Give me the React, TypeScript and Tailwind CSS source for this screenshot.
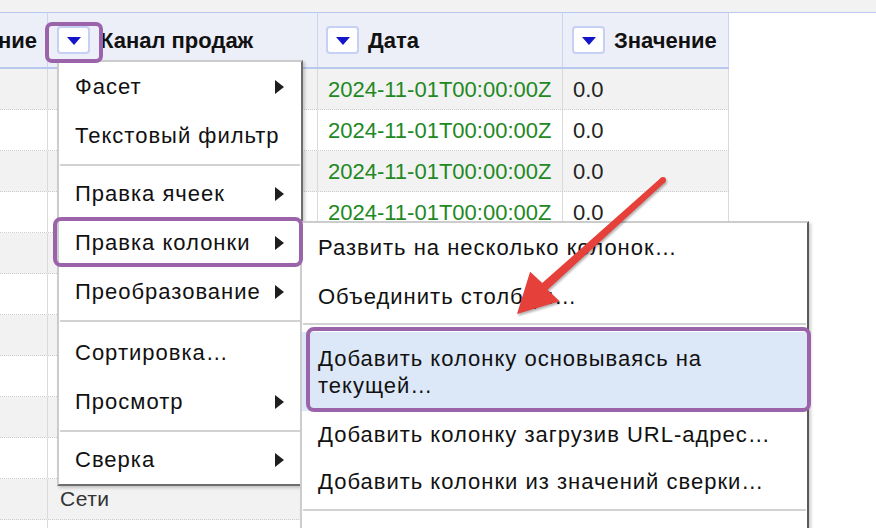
const HeaderButton = () => (
  <span className="flex h-[28px] w-[33px] shrink-0 items-center justify-center rounded-[4px] border-2 border-[#c5d0f2] bg-white">
    <span className="mt-[1px] h-0 w-0 border-x-[7px] border-t-[8px] border-x-transparent border-t-[#1414c8]" />
  </span>
);

const SubArrow = () => (
  <span className="h-0 w-0 border-y-[7px] border-l-[9px] border-y-transparent border-l-[#1e1e1e]" />
);

const Separator = ({ top = "mt-[4px] mb-[3px]" }: { top?: string }) => (
  <div className={`${top} mx-[1px] h-[2px] bg-[#d2d2d2]`} />
);

const MenuItem = ({ label, sub }: { label: string; sub?: boolean }) => (
  <div className="flex h-[49px] items-center justify-between pl-[16px] pr-[17px] text-[22px] tracking-[1px] text-[#111]">
    <span>{label}</span>
    {sub && <SubArrow />}
  </div>
);

const App = () => {
  const rows = Array.from({ length: 12 }, (_, i) => ({
    channel: i === 10 ? "Сети" : "",
    date: "2024-11-01T00:00:00Z",
    value: "0.0",
  }));

  return (
    <div className="relative h-[528px] w-[876px] overflow-hidden bg-white font-['Liberation_Sans',Arial,sans-serif]">
      <div className="h-[13px] border-b border-[#b9c8ee] bg-[#f2f2f2]" />

      <div className="w-[729px]">
        {/* header */}
        <div className="flex h-[56px] border-b-2 border-[#b9c8ee] bg-[#eceef8] text-[22px] font-bold text-[#111]">
          <div className="flex w-[48px] items-center justify-end overflow-hidden whitespace-nowrap border-r border-[#cdd5ee] pr-[10px]">
            Наименование
          </div>
          <div className="flex w-[270px] items-center gap-[10px] border-r border-[#cdd5ee] pl-[9px]">
            <HeaderButton />
            <span>Канал продаж</span>
          </div>
          <div className="flex w-[245px] items-center gap-[9px] border-r border-[#cdd5ee] pl-[8px]">
            <HeaderButton />
            <span>Дата</span>
          </div>
          <div className="flex w-[166px] items-center gap-[9px] border-r border-[#cdd5ee] pl-[9px]">
            <HeaderButton />
            <span>Значение</span>
          </div>
        </div>

        {/* rows */}
        {rows.map((row, i) => (
          <div
            key={i}
            className={`flex h-[41px] border-b border-dotted border-[#cccccc] text-[22px] ${i % 2 === 0 ? "bg-[#f2f2f2]" : "bg-white"}`}
          >
            <div className="w-[48px] border-r border-[#dadada]" />
            <div className="flex w-[270px] items-center border-r border-[#dadada] pl-[12px] text-[21px] tracking-[0.5px] text-[#333]">
              {row.channel}
            </div>
            <div className="flex w-[245px] items-center border-r border-[#dadada] pl-[10px] text-[#21891f]">
              {row.date}
            </div>
            <div className="flex w-[166px] items-center border-r border-[#dadada] pl-[10px] text-[#222]">
              {row.value}
            </div>
          </div>
        ))}
      </div>

      {/* column menu */}
      <div className="absolute left-[57px] top-[60px] w-[246px] border-2 border-[#cccccc] border-b-[#6e6e6e] border-r-[#6e6e6e] bg-white shadow-[2px_2px_3px_rgba(0,0,0,0.2)]">
        <MenuItem label="Фасет" sub />
        <MenuItem label="Текстовый фильтр" />
        <Separator />
        <MenuItem label="Правка ячеек" sub />
        <MenuItem label="Правка колонки" sub />
        <MenuItem label="Преобразование" sub />
        <Separator top="mt-[4px] mb-[6px]" />
        <MenuItem label="Сортировка…" />
        <MenuItem label="Просмотр" sub />
        <Separator />
        <MenuItem label="Сверка" sub />
      </div>

      {/* submenu */}
      <div className="absolute left-[300px] top-[221px] h-[330px] w-[509px] border-2 border-[#cccccc] border-r-[#5a5a5a] bg-white text-[22px] tracking-[1px] text-[#111] shadow-[2px_2px_3px_rgba(0,0,0,0.2)]">
        <div className="flex h-[49px] items-center pl-[16px]">Развить на несколько колонок…</div>
        <div className="flex h-[49px] items-center pl-[16px]">Объединить столбцы…</div>
        <Separator top="mt-[2px] mb-[7px]" />
        <div className="flex h-[79px] flex-col justify-center bg-[#dce7f7] pl-[16px] leading-[27px]">
          <span>Добавить колонку основываясь на</span>
          <span>текущей…</span>
        </div>
        <div className="flex h-[47px] items-center pl-[16px]">Добавить колонку загрузив URL-адрес…</div>
        <div className="flex h-[47px] items-center pl-[16px]">Добавить колонки из значений сверки…</div>
        <Separator />
      </div>

      {/* annotation boxes */}
      <div className="absolute left-[45px] top-[22px] h-[41px] w-[58px] rounded-[7px] border-4 border-[#9a63aa]" />
      <div className="absolute left-[53px] top-[217px] h-[50px] w-[250px] rounded-[8px] border-4 border-[#9a63aa]" />
      <div className="absolute left-[306px] top-[327px] h-[85px] w-[505px] rounded-[8px] border-4 border-[#9a63aa]" />

      {/* red arrow */}
      <svg
        className="pointer-events-none absolute left-0 top-0 drop-shadow-[1px_2px_1px_rgba(0,0,0,0.3)]"
        width="876"
        height="528"
        viewBox="0 0 876 528"
      >
        <polygon
          fill="#e5403a"
          points="661,177.8 542.2,283.1 530.1,271.8 517,314 559.6,301.2 547.6,289.7 665,182.2"
        />
        <circle cx="663" cy="180" r="3" fill="#e5403a" />
      </svg>
    </div>
  );
};

export default App;
